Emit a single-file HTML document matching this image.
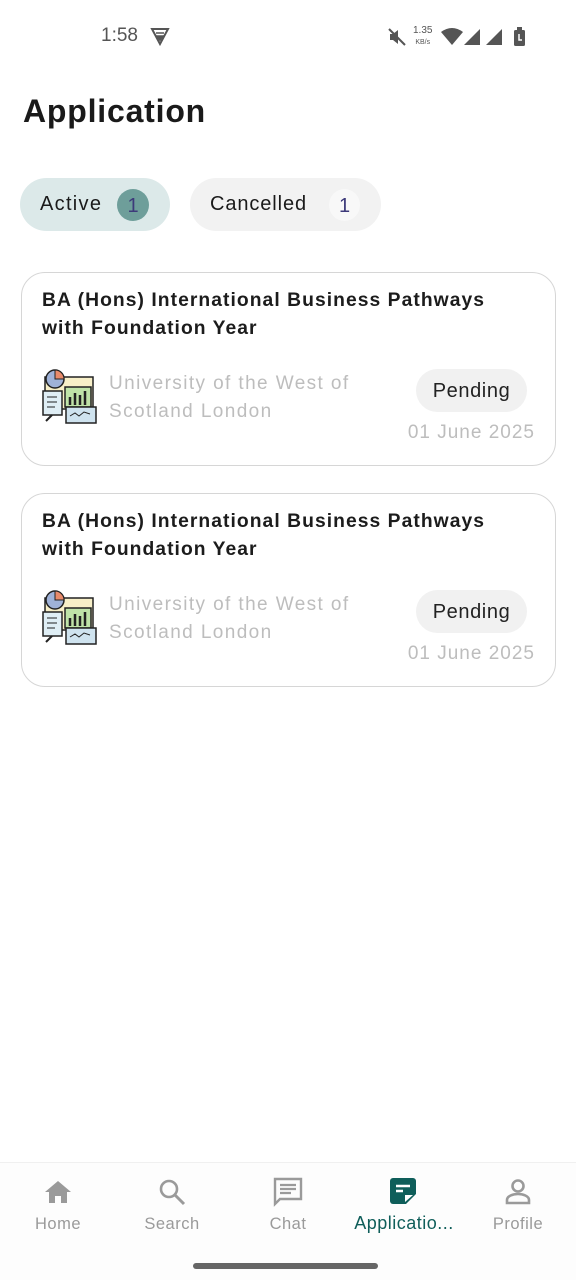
<!DOCTYPE html><html><head><meta charset="utf-8"><style>
*{box-sizing:border-box;margin:0;padding:0}
body{width:576px;height:1280px;background:#fff;font-family:"Liberation Sans",sans-serif;position:relative;overflow:hidden;color:#1a1a1a}
.abs{position:absolute}
.card{position:absolute;left:21px;width:535px;height:194px;border:1.5px solid #d6d6d6;border-radius:24px}
.t{position:absolute;left:20px;top:14px;font-weight:bold;font-size:19.3px;line-height:28px;color:#1c1c1c;letter-spacing:1.05px;white-space:nowrap}
.u{position:absolute;left:87px;top:97px;font-size:19px;line-height:28px;color:#bdbdbd;letter-spacing:1.4px}
.p{position:absolute;left:394px;top:96px;width:111px;height:43px;border-radius:22px;background:#f1f1f1;font-size:20px;text-align:center;line-height:44px;color:#222;letter-spacing:0.6px}
.d{position:absolute;right:20px;top:149px;font-size:19px;color:#bdbdbd;letter-spacing:1px}
.nl{position:absolute;top:1215px;font-size:16.5px;color:#9a9a9a;text-align:center;width:120px;letter-spacing:0.5px}
</style></head><body>
<div class="abs" style="left:101px;top:25px;font-size:19px;color:#555">1:58</div>
<svg class="abs" style="left:150px;top:26px" width="20" height="20" viewBox="0 0 20 20"><path d="M2 3h16L10 18z" fill="none" stroke="#555" stroke-width="2"/><path d="M6 7h8M7 10h6l-3 4z" stroke="#555" stroke-width="1.6" fill="#555"/></svg>
<svg class="abs" style="left:388px;top:28px" width="18" height="18" viewBox="0 0 18 18"><path d="M2 6h3l5-4v14l-5-4H2z" fill="#555"/><path d="M1 1l16 16" stroke="#555" stroke-width="2"/></svg>
<div class="abs" style="left:413px;top:25px;font-size:10px;color:#555;line-height:11px;text-align:center">1.35<br><span style="font-size:7px">KB/s</span></div>
<svg class="abs" style="left:441px;top:27px" width="90" height="20" viewBox="0 0 90 20"><path d="M0 5Q11-3 22 5L11 18z" fill="#555"/><path d="M23 18L39 2v16z" fill="#555"/><path d="M45 18L61 2v16z" fill="#555"/><rect x="73" y="3" width="11" height="16" rx="1.5" fill="#555"/><rect x="76" y="0" width="5" height="3" fill="#555"/><path d="M78 7v6h3" stroke="#fff" stroke-width="1.5" fill="none"/></svg>
<div class="abs" style="left:23px;top:93px;font-size:32px;font-weight:bold;color:#1a1a1a;letter-spacing:0.8px">Application</div>
<div class="abs" style="left:20px;top:178px;width:150px;height:53px;border-radius:27px;background:#dce9e9"></div>
<div class="abs" style="left:40px;top:193px;font-size:20px;letter-spacing:1.3px">Active</div>
<div class="abs" style="left:117px;top:189px;width:32px;height:32px;border-radius:50%;background:#6e9e9a;color:#3d3a7a;text-align:center;line-height:34px;font-size:20px">1</div>
<div class="abs" style="left:190px;top:178px;width:191px;height:53px;border-radius:27px;background:#f2f2f2"></div>
<div class="abs" style="left:210px;top:193px;font-size:20px;letter-spacing:0.9px">Cancelled</div>
<div class="abs" style="left:329px;top:189px;width:31px;height:32px;border-radius:50%;background:#f8f8f8;color:#3d3a7a;text-align:center;line-height:34px;font-size:20px">1</div>

<div class="card" style="top:272px">
<div class="t">BA (Hons) International Business Pathways<br>with Foundation Year</div>
<svg class="abs" style="left:20px;top:96px" width="55" height="55" viewBox="0 0 55 55"><rect x="3" y="8" width="48" height="32" fill="#f7efc8" stroke="#222" stroke-width="1.5"/><circle cx="13" cy="10" r="9" fill="#9fb2d8" stroke="#222" stroke-width="1.5"/><path d="M13 10V1a9 9 0 0 1 9 9z" fill="#e88a6a" stroke="#222"/><rect x="1" y="22" width="19" height="24" fill="#dfeef5" stroke="#222" stroke-width="1.5"/><path d="M5 28h10M5 33h10M5 38h8" stroke="#222"/><rect x="23" y="18" width="26" height="20" fill="#bfe3a8" stroke="#222" stroke-width="1.5"/><path d="M28 36v-8M33 36v-12M38 36v-10M43 36v-14" stroke="#222" stroke-width="2.5"/><rect x="24" y="38" width="30" height="16" fill="#cfe3ef" stroke="#222" stroke-width="1.5"/><path d="M28 47l5-3 4 3 5-4 6 2" stroke="#222" fill="none"/><path d="M4 52l6-6" stroke="#222" stroke-width="2"/></svg>
<div class="u">University of the West of<br>Scotland London</div>
<div class="p">Pending</div>
<div class="d">01 June 2025</div>
</div>
<div class="card" style="top:493px">
<div class="t">BA (Hons) International Business Pathways<br>with Foundation Year</div>
<svg class="abs" style="left:20px;top:96px" width="55" height="55" viewBox="0 0 55 55"><rect x="3" y="8" width="48" height="32" fill="#f7efc8" stroke="#222" stroke-width="1.5"/><circle cx="13" cy="10" r="9" fill="#9fb2d8" stroke="#222" stroke-width="1.5"/><path d="M13 10V1a9 9 0 0 1 9 9z" fill="#e88a6a" stroke="#222"/><rect x="1" y="22" width="19" height="24" fill="#dfeef5" stroke="#222" stroke-width="1.5"/><path d="M5 28h10M5 33h10M5 38h8" stroke="#222"/><rect x="23" y="18" width="26" height="20" fill="#bfe3a8" stroke="#222" stroke-width="1.5"/><path d="M28 36v-8M33 36v-12M38 36v-10M43 36v-14" stroke="#222" stroke-width="2.5"/><rect x="24" y="38" width="30" height="16" fill="#cfe3ef" stroke="#222" stroke-width="1.5"/><path d="M28 47l5-3 4 3 5-4 6 2" stroke="#222" fill="none"/><path d="M4 52l6-6" stroke="#222" stroke-width="2"/></svg>
<div class="u">University of the West of<br>Scotland London</div>
<div class="p">Pending</div>
<div class="d">01 June 2025</div>
</div>

<div class="abs" style="left:0;top:1162px;width:576px;height:118px;background:#fdfdfd;border-top:1px solid #f0f0f0"></div>
<svg class="abs" style="left:44px;top:1179px" width="28" height="26" viewBox="0 0 28 26"><path d="M14 2L1 13h4v11h6v-7h6v7h6V13h4z" fill="#9a9a9a"/></svg>
<svg class="abs" style="left:158px;top:1178px" width="28" height="28" viewBox="0 0 28 28"><circle cx="11" cy="11" r="8" fill="none" stroke="#9a9a9a" stroke-width="2.6"/><path d="M17 17l9 9" stroke="#9a9a9a" stroke-width="3"/></svg>
<svg class="abs" style="left:273px;top:1177px" width="30" height="30" viewBox="0 0 30 30"><path d="M2 2h26v20H7l-5 5z" fill="none" stroke="#9a9a9a" stroke-width="2.4"/><path d="M7 8h16M7 12h16M7 16h11" stroke="#9a9a9a" stroke-width="2.2"/></svg>
<svg class="abs" style="left:390px;top:1178px" width="26" height="26" viewBox="0 0 26 26"><path d="M3 0h20a3 3 0 0 1 3 3v13l-10 10H3a3 3 0 0 1-3-3V3a3 3 0 0 1 3-3z" fill="#0f5e5a"/><path d="M6 8h14M6 13h7" stroke="#fff" stroke-width="2.4"/><path d="M15 24v-7h8z" fill="#fff"/></svg>
<svg class="abs" style="left:505px;top:1178px" width="26" height="28" viewBox="0 0 26 28"><circle cx="13" cy="8" r="5.5" fill="none" stroke="#9a9a9a" stroke-width="2.6"/><path d="M2 25v-3c0-4 6-6 11-6s11 2 11 6v3z" fill="none" stroke="#9a9a9a" stroke-width="2.6"/></svg>
<div class="nl" style="left:-2px">Home</div>
<div class="nl" style="left:112px">Search</div>
<div class="nl" style="left:228px">Chat</div>
<div class="nl" style="left:343px;color:#0f5e5a;font-size:18px;top:1213px;width:122px">Applicatio...</div>
<div class="nl" style="left:458px">Profile</div>
<div class="abs" style="left:193px;top:1263px;width:185px;height:6px;border-radius:3px;background:#666"></div>
</body></html>
